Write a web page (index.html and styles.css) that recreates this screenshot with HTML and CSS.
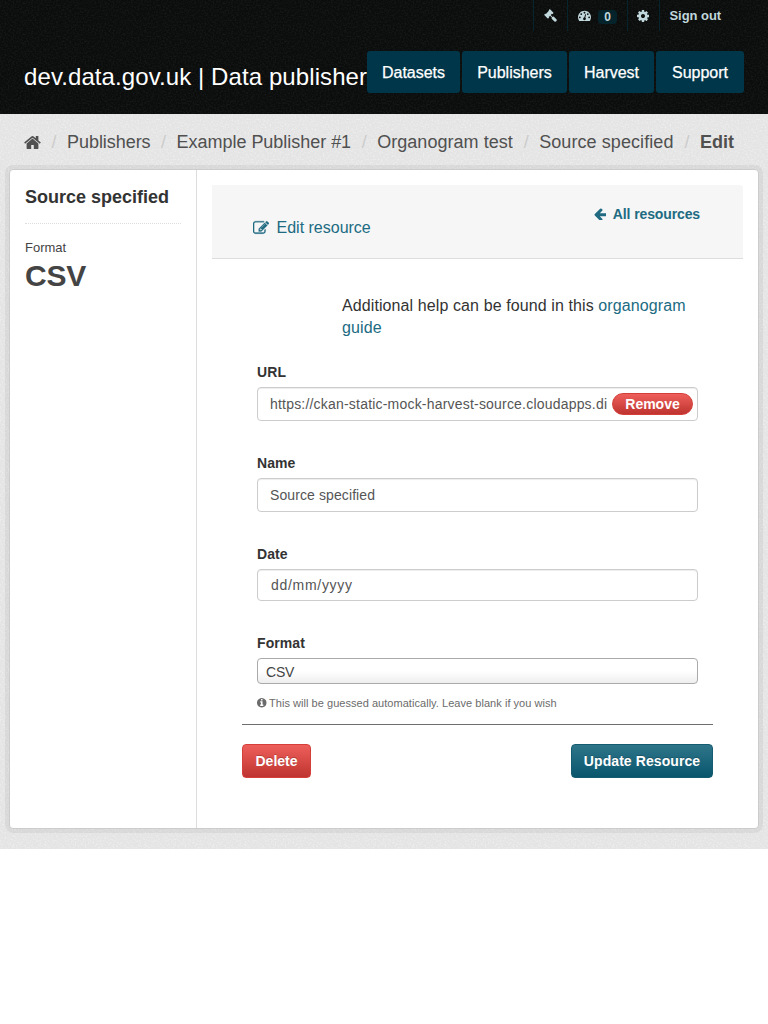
FILE: index.html
```html
<!DOCTYPE html>
<html lang="en">
<head>
<meta charset="utf-8">
<title>Edit resource</title>
<link rel="stylesheet" href="styles.css">
</head>
<body>
<div class="account">
  <a class="acc acc-gavel"><svg class="icon" viewBox="0 0 1792 1792"><path d="M1771 1536q0 53-37 90l-107 108q-39 37-91 37-53 0-90-37l-363-364q-38-36-38-90 0-53 43-96l-256-256-126 126q-14 14-34 14t-34-14q2 2 12.5 12t12.5 13 10 11.5 10 13.5 6 13.5 5.5 16.5 1.5 18q0 38-28 68-3 3-16.5 18t-19 20.5-18.5 16.5-22 15.5-22 9-26 4.5q-40 0-68-28l-408-408q-28-28-28-68 0-13 4.5-26t9-22 15.5-22 16.5-18.5 20.5-19 18-16.5q30-28 68-28 10 0 18 1.5t16.5 5.5 13.5 6 13.5 10 11.5 10 13 12.5 12 12.5q-14-14-14-34t14-34l348-348q14-14 34-14t34 14q-2-2-12.5-12t-12.5-13-10-11.5-10-13.5-6-13.5-5.5-16.5-1.5-18q0-38 28-68 3-3 16.5-18t19-20.5 18.5-16.5 22-15.5 22-9 26-4.5q40 0 68 28l408 408q28 28 28 68 0 13-4.5 26t-9 22-15.5 22-16.5 18.5-20.5 19-18 16.5q-30 28-68 28-10 0-18-1.5t-16.5-5.5-13.5-6-13.5-10-11.5-10-13-12.5-12-12.5q14 14 14 34t-14 34l-126 126 256 256q43-43 96-43 52 0 91 37l363 363q37 39 37 91z"/></svg></a>
  <a class="acc acc-dash"><svg class="icon" viewBox="0 0 1792 1792"><path d="M384 1152q0-53-37.500-90.500t-90.500-37.500-90.500 37.500-37.500 90.500 37.500 90.500 90.500 37.500 90.500-37.500 37.500-90.500zm192-448q0-53-37.500-90.500t-90.500-37.500-90.500 37.500-37.500 90.500 37.500 90.500 90.500 37.500 90.500-37.500 37.500-90.500zm428 481l101-382q6-26-7.500-48.500t-38.500-29.500-48 6.500-30 39.500l-101 382q-60 5-107 43.500t-63 98.500q-20 77 20 146t117 89 146-20 89-117q16-60-6-117t-72-91zm660-33q0-53-37.500-90.500t-90.500-37.500-90.500 37.500-37.500 90.500 37.500 90.500 90.500 37.500 90.500-37.500 37.500-90.500zm-640-640q0-53-37.500-90.500t-90.500-37.500-90.500 37.500-37.500 90.500 37.500 90.500 90.500 37.500 90.500-37.500 37.500-90.500zm448 192q0-53-37.500-90.500t-90.500-37.500-90.500 37.500-37.500 90.500 37.500 90.500 90.500 37.500 90.500-37.500 37.500-90.500zm320 448q0 261-141 483-19 29-54 29h-1402q-35 0-54-29-141-221-141-483 0-182 71-348t191-286 286-191 348-71 348 71 286 191 191 286 71 348z"/></svg><span class="count">0</span></a>
  <a class="acc acc-cog"><svg class="icon" viewBox="128 128 1536 1536"><path d="M1152 896q0-106-75-181t-181-75-181 75-75 181 75 181 181 75 181-75 75-181zm512-109v222q0 12-8 23t-20 13l-185 28q-19 54-39 91 35 50 107 138 10 12 10 25t-9 23q-27 37-99 108t-94 71q-12 0-26-9l-138-108q-44 23-91 38-16 136-29 186-7 28-36 28h-222q-14 0-24.500-8.500t-11.500-21.500l-28-184q-49-16-90-37l-141 107q-10 9-25 9-14 0-25-11-126-114-165-168-7-10-7-23 0-12 8-23 15-21 51-66.500t54-70.500q-27-50-41-99l-183-27q-13-2-21-12.500t-8-23.500v-222q0-12 8-23t19-13l186-28q14-46 39-92-40-57-107-138-10-12-10-24 0-10 9-23 26-36 98.500-107.500t94.500-71.500q13 0 26 10l138 107q44-23 91-38 16-136 29-186 7-28 36-28h222q14 0 24.500 8.500t11.500 21.500l28 184q49 16 90 37l142-107q9-9 24-9 13 0 25 10 129 119 165 170 7 8 7 22 0 12-8 23-15 21-51 66.500t-54 70.500q26 50 41 98l183 28q13 2 21 12.500t8 23.500z"/></svg></a>
  <a class="acc acc-out"><span>Sign out</span></a>
</div>
<header class="masthead">
  <a class="logo"><span>dev.data.gov.uk | Data publisher</span></a>
  <nav class="nav">
    <a class="n1">Datasets</a><a class="n2">Publishers</a><a class="n3">Harvest</a><a class="n4">Support</a>
  </nav>
</header>
<main class="main">
  <div class="crumbs">
    <svg class="home" viewBox="64 64 1664 1664"><path d="M1472 992v480q0 26-19 45t-45 19h-384v-384h-256v384h-384q-26 0-45-19t-19-45v-480q0-1 .5-3t.5-3l575-474 575 474q1 2 1 6zm223-69l-62 74q-8 9-21 11h-3q-13 0-21-7l-692-577-692 577q-12 8-24 7-13-2-21-11l-62-74q-8-10-7-23.500t11-21.500l719-599q32-26 76-26t76 26l244 204v-195q0-14 9-23t23-9h192q14 0 23 9t9 23v408l219 182q10 8 11 21.500t-7 23.500z"/></svg>
    <i>/</i><a class="c1">Publishers</a><i>/</i><a class="c2">Example Publisher #1</a><i>/</i><a class="c3">Organogram test</a><i>/</i><a class="c4">Source specified</a><i>/</i><b class="c5">Edit</b>
  </div>
  <div class="wrapper">
    <aside class="side">
      <h2><span>Source specified</span></h2>
      <div class="side-label">Format</div>
      <div class="side-value"><span>CSV</span></div>
    </aside>
    <section class="primary">
      <div class="page-header">
        <a class="tab"><svg viewBox="0 0 1792 1792"><path d="M888 1184l116-116-152-152-116 116v56h96v96h56zm440-720q-16-16-33 1l-350 350q-17 17-1 33t33-1l350-350q17-17 1-33zm80 594v190q0 119-84.500 203.500t-203.500 84.500h-832q-119 0-203.500-84.500t-84.500-203.500v-832q0-119 84.500-203.500t203.500-84.500h832q63 0 117 25 15 7 18 23 3 17-9 29l-49 49q-14 14-32 8-23-6-45-6h-832q-66 0-113 47t-47 113v832q0 66 47 113t113 47h832q66 0 113-47t47-113v-126q0-13 9-22l64-64q15-15 35-7t20 29zm-96-738l288 288-672 672h-288v-288zm444 132l-92 92-288-288 92-92q28-28 68-28t68 28l152 152q28 28 28 68t-28 68z"/></svg><span>Edit resource</span></a>
        <a class="all"><svg viewBox="128 128 1536 1536"><path d="M1664 896v128q0 53-32.500 90.500t-84.500 37.500h-704l293 294q38 36 38 90t-38 90l-75 76q-37 37-90 37-52 0-91-37l-651-652q-37-37-37-90 0-52 37-91l651-650q38-38 91-38 52 0 90 38l75 74q38 38 38 91t-38 91l-293 293h704q52 0 84.500 37.500t32.500 90.500z"/></svg><span>All resources</span></a>
      </div>
      <form class="form">
        <p class="help">Additional help can be found in this <a>organogram<br>guide</a></p>
        <div class="field f-url">
          <label>URL</label>
          <div class="input"><span class="val url">https://ckan-static-mock-harvest-source.cloudapps.di</span><span class="remove">Remove</span></div>
        </div>
        <div class="field f-name">
          <label>Name</label>
          <div class="input"><span class="val name">Source specified</span></div>
        </div>
        <div class="field f-date">
          <label>Date</label>
          <div class="input date"><span class="val">dd/mm/yyyy</span></div>
        </div>
        <div class="field f-format">
          <label>Format</label>
          <div class="select"><span>CSV</span></div>
        </div>
        <div class="hint"><svg viewBox="128 128 1536 1536"><path d="M1152 1376v-160q0-14-9-23t-23-9h-96v-512q0-14-9-23t-23-9h-320q-14 0-23 9t-9 23v160q0 14 9 23t23 9h96v320h-96q-14 0-23 9t-9 23v160q0 14 9 23t23 9h448q14 0 23-9t9-23zm-128-896v-160q0-14-9-23t-23-9h-192q-14 0-23 9t-9 23v160q0 14 9 23t23 9h192q14 0 23-9t9-23zm640 416q0 209-103 385.500t-279.500 279.500-385.500 103-385.500-103-279.500-279.500-103-385.500 103-385.500 279.500-279.500 385.500-103 385.500 103 279.500 279.500 103 385.500z"/></svg><span>This will be guessed automatically. Leave blank if you wish</span></div>
        <div class="actions"><a class="btn del"><span>Delete</span></a><a class="btn upd"><span>Update Resource</span></a></div>
      </form>
    </section>
  </div>
</main>
</body>
</html>
```
FILE: styles.css
```css
* { box-sizing: border-box; }
body { margin: 0; background: #fff; color: #333; font: 14px/20px "Helvetica Neue", "Liberation Sans", Arial, sans-serif; }
a, span, label, b { white-space: nowrap; }
svg { display: block; fill: currentColor; flex: none; }
.account, .masthead { background-color: #0b0c0c; background-image: url("data:image/svg+xml,%3Csvg xmlns='http://www.w3.org/2000/svg' width='100' height='100'%3E%3Cfilter id='n'%3E%3CfeTurbulence type='fractalNoise' baseFrequency='.6' numOctaves='2' stitchTiles='stitch'/%3E%3CfeColorMatrix values='0 0 0 0 1 0 0 0 0 1 0 0 0 0 1 .12 0 0 0 -.05'/%3E%3C/filter%3E%3Crect width='100' height='100' filter='url(%23n)'/%3E%3C/svg%3E"); }
.account { height: 31px; padding-right: 37px; display: flex; justify-content: flex-end; color: #c0d7db; font-weight: bold; font-size: 13px; }
.acc { display: flex; align-items: center; height: 31px; border-left: 1px solid #06242b; padding: 0 0 0 10px; }
.icon { width: 13px; height: 13px; }
.acc-gavel { width: 34px; }
.acc-dash { width: 60px; }
.acc-cog { width: 32px; padding-left: 9px; }
.acc-cog .icon { width: 12px; height: 12px; }
.acc-out { width: 72px; padding-left: 9.5px; letter-spacing: -.05px; }
.count { margin-left: 7px; width: 19px; height: 14px; line-height: 14px; margin-top: 2px; border-radius: 4px; background: #05232b; text-align: center; font-size: 12px; }
.masthead { height: 83px; padding: 20px 24px 0; display: flex; color: #fff; }
.logo { width: 343px; font-size: 24px; line-height: 28px; padding-top: 12px; letter-spacing: .09px; }
.nav { display: flex; gap: 2px; font-size: 16px; }
.nav a { height: 42px; line-height: 44px; border-radius: 3px; background: #003649; text-align: center; -webkit-text-stroke: .25px #fff; }
.n1 { width: 93px; } .n2 { width: 105px; } .n3 { width: 85px; } .n4 { width: 88px; }
.main { height: 735px; background-color: #e4e4e4; background-image: url("data:image/svg+xml,%3Csvg xmlns='http://www.w3.org/2000/svg' width='100' height='100'%3E%3Cfilter id='n'%3E%3CfeTurbulence type='fractalNoise' baseFrequency='.6' numOctaves='2' stitchTiles='stitch'/%3E%3CfeColorMatrix values='0 0 0 0 1 0 0 0 0 1 0 0 0 0 1 1 0 0 0 -.45'/%3E%3C/filter%3E%3Crect width='100' height='100' filter='url(%23n)'/%3E%3C/svg%3E"); }
.crumbs { height: 55px; padding: 1px 0 0 24px; display: flex; align-items: center; font-size: 18px; color: #505050; }
.home { width: 17px; height: 17px; }
.crumbs i { width: 26px; text-align: center; font-style: normal; color: #ccc; }
.c1 { width: 83.6px; letter-spacing: -.05px; } .c2 { width: 174.6px; letter-spacing: -.03px; } .c3 { width: 136px; letter-spacing: .04px; } .c4 { width: 134.8px; letter-spacing: .08px; }
.wrapper { margin: 0 9px; height: 660px; display: flex; background: #fff; border: 1px solid #ccc; border-radius: 4px; box-shadow: 0 0 0 4px rgba(0,0,0,.05); }
.side { width: 187px; border-right: 1px solid #ddd; padding: 0 15px; }
.side h2 { margin: 0; height: 54px; padding-top: 15px; font-size: 18px; line-height: 24px; border-bottom: 1px dotted #ddd; }
.side-label { margin-top: 14px; font-size: 13px; line-height: 20px; color: #444; }
.side-value { font-size: 30px; line-height: 35px; font-weight: bold; color: #444; letter-spacing: -.2px; }
.primary { flex: 1; padding: 15px 15px 0; }
.page-header { height: 74px; background: #f6f6f6; border-bottom: 1px solid #ddd; border-radius: 0 3px 0 0; padding: 0 43px 0 41px; display: flex; justify-content: space-between; color: #206b82; }
.tab { display: flex; gap: 7.5px; font-size: 16px; padding-top: 32px; height: 54px; align-items: center; }
.tab svg { width: 16px; height: 16px; stroke: currentColor; stroke-width: 30; }
.all { display: flex; gap: 6.5px; font-weight: bold; padding-top: 19px; height: 39px; align-items: center; letter-spacing: -.12px; }
.all svg { width: 12.5px; height: 12.5px; }
.form { padding: 36px 45px 0; }
.help { margin: 0 0 0 85px; font-size: 16px; line-height: 22px; white-space: nowrap; letter-spacing: .1px; }
.help a { color: #206b82; }
.field label { display: block; font-weight: bold; height: 20px; margin-bottom: 5px; letter-spacing: .08px; }
.f-url { margin-top: 23px; }
.f-name { margin-top: 32px; }
.f-date { margin-top: 32px; }
.f-format { margin-top: 32px; }
.input { height: 34px; padding-left: 12px; display: flex; align-items: center; border: 1px solid #ccc; border-radius: 4px; box-shadow: inset 0 1px 1px rgba(0,0,0,.075); color: #555; }
.url { width: 337px; letter-spacing: .2px; }
.name { letter-spacing: .1px; }
.date { height: 32px; padding-left: 13px; letter-spacing: .7px; }
.remove { margin-left: 5px; width: 81px; height: 22px; line-height: 20px; text-align: center; border-radius: 11px; border: 1px solid #d43f3a; background: linear-gradient(#ee5f5b, #bf3430); color: #fff; font-weight: bold; }
.select { height: 26px; padding: 2px 0 0 8px; display: flex; align-items: center; border: 1px solid #aaa; border-radius: 4px; background: linear-gradient(#fff 50%, #eee); color: #444; letter-spacing: -.2px; }
.hint { margin-top: 9px; height: 20px; display: flex; align-items: center; gap: 2.5px; font-size: 11px; color: #6b6b6b; letter-spacing: .04px; }
.hint svg { width: 9.5px; height: 9.5px; }
.actions { margin: 11px -15px 0; border-top: 1px solid #6e6e6e; padding-top: 19px; display: flex; justify-content: space-between; }
.btn { height: 34px; line-height: 32px; text-align: center; border-radius: 4px; border: 1px solid #d43f3a; color: #fff; font-weight: bold; text-shadow: 0 -1px 0 rgba(0,0,0,.2); }
.del { width: 69px; background: linear-gradient(#ee5f5b, #bf3430); }
.upd { width: 142px; border-color: #165c70; background: linear-gradient(#2f7589, #08566d); letter-spacing: .08px; }
```
